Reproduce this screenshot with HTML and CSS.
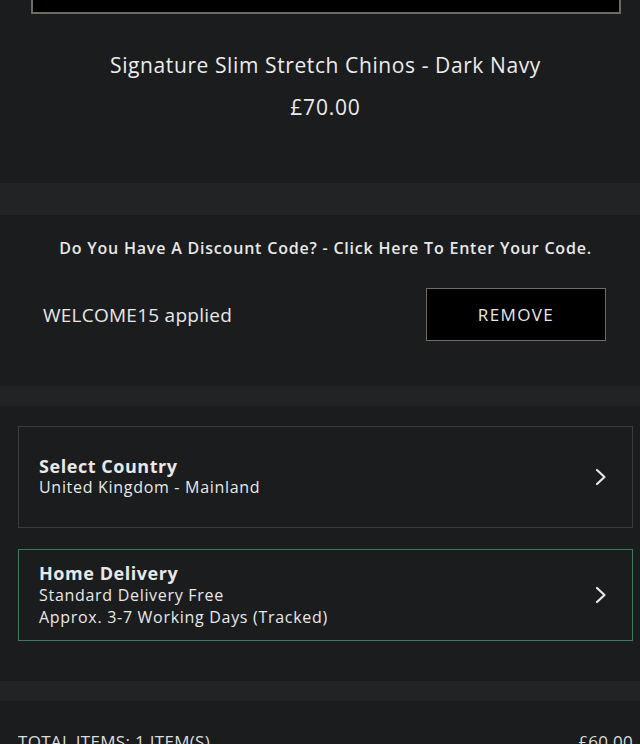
FILE: index.html
```html
<!DOCTYPE html>
<html lang="en">
<head>
<meta charset="utf-8">
<title>Basket</title>
<link rel="stylesheet" href="styles.css">
</head>
<body>
<section class="product">
  <div class="container">
    <div class="image-box"></div>
    <h2 class="product-title">Signature Slim Stretch Chinos - Dark Navy</h2>
    <p class="product-price">£70.00</p>
  </div>
</section>
<div class="band band-lg"></div>
<section class="discount">
  <div class="container">
    <p class="discount-prompt">Do You Have A Discount Code? - Click Here To Enter Your Code.</p>
    <div class="discount-row">
      <span class="discount-applied">WELCOME15 applied</span>
      <button class="btn-remove">REMOVE</button>
    </div>
  </div>
</section>
<div class="band"></div>
<section class="delivery">
  <div class="container">
    <div class="option option-country">
      <div class="option-text">
        <div class="option-title">Select Country</div>
        <div class="option-line">United Kingdom - Mainland</div>
      </div>
      <svg class="chevron" width="12" height="18" viewBox="0 0 12 18"><path d="M2 2 L9.5 9 L2 16" fill="none" stroke="#e6e6e6" stroke-width="2.2" stroke-linecap="round" stroke-linejoin="round"/></svg>
    </div>
    <div class="option option-selected">
      <div class="option-text">
        <div class="option-title">Home Delivery</div>
        <div class="option-line">Standard Delivery Free</div>
        <div class="option-line">Approx. 3-7 Working Days (Tracked)</div>
      </div>
      <svg class="chevron" width="12" height="18" viewBox="0 0 12 18"><path d="M2 2 L9.5 9 L2 16" fill="none" stroke="#e6e6e6" stroke-width="2.2" stroke-linecap="round" stroke-linejoin="round"/></svg>
    </div>
  </div>
</section>
<div class="band"></div>
<section class="totals">
  <div class="container">
    <div class="total-row">
      <span class="total-label">TOTAL ITEMS: 1 ITEM(S)</span>
      <span class="total-value">£60.00</span>
    </div>
  </div>
</section>
</body>
</html>
```

FILE: styles.css
```css
* { box-sizing: border-box; }
html, body { margin: 0; padding: 0; }
body {
  background: #1b1c1e;
  color: #e8e8e8;
  font-family: "Open Sans", "Liberation Sans", sans-serif;
  width: 640px;
  overflow: hidden;
}
.container {
  margin-left: 18px;
  width: 615px;
}
.band {
  height: 20px;
  background: #222325;
}
.band-lg { height: 32px; }

.product { padding-bottom: 62px; }
.image-box {
  width: 590px;
  height: 14px;
  margin: 0 auto;
  background: #000;
  border: 2px solid #6f6b63;
  border-top: none;
}
.product-title {
  margin: 37px 0 0;
  text-align: center;
  font-size: 21px;
  line-height: 28px;
  font-weight: 400;
  letter-spacing: 0.6px;
  color: #ececec;
}
.product-price {
  margin: 14px 0 0;
  text-align: center;
  font-size: 21px;
  line-height: 28px;
  font-weight: 400;
  letter-spacing: 0.8px;
  color: #ececec;
}

.discount { padding: 23px 0 45px; }
.discount-prompt {
  margin: 0;
  text-align: center;
  font-size: 16px;
  line-height: 20px;
  font-weight: 600;
  letter-spacing: 0.8px;
}
.discount-row {
  margin-top: 30px;
  padding: 0 27px 0 25px;
  display: flex;
  align-items: center;
  justify-content: space-between;
}
.discount-applied {
  font-size: 19px;
  font-weight: 500;
  letter-spacing: 0.25px;
}
.btn-remove {
  width: 180px;
  height: 53px;
  background: #000;
  border: 1px solid #6f6b63;
  color: #e8e8e8;
  font-family: inherit;
  font-size: 17px;
  font-weight: 500;
  letter-spacing: 1.4px;
  padding: 0;
}

.delivery { padding: 20px 0 40px; }
.option {
  display: flex;
  align-items: center;
  justify-content: space-between;
  border: 1px solid #3b3c3e;
  padding: 12px 25px 12px 20px;
}
.option-country { min-height: 102px; }
.option-selected {
  margin-top: 21px;
  border-color: #3e7b5d;
}
.option-title {
  font-size: 18px;
  line-height: 21px;
  font-weight: 700;
  letter-spacing: 0.55px;
}
.option-line {
  font-size: 16px;
  line-height: 22px;
  font-weight: 500;
  letter-spacing: 0.7px;
}
.option-country .option-line { line-height: 21px; }
.option-selected .option-title { line-height: 22px; }

.totals { padding-top: 31px; }
.total-row {
  display: flex;
  justify-content: space-between;
  font-size: 17px;
  line-height: 20px;
  letter-spacing: 0.3px;
  color: #dcdcdc;
}
```
